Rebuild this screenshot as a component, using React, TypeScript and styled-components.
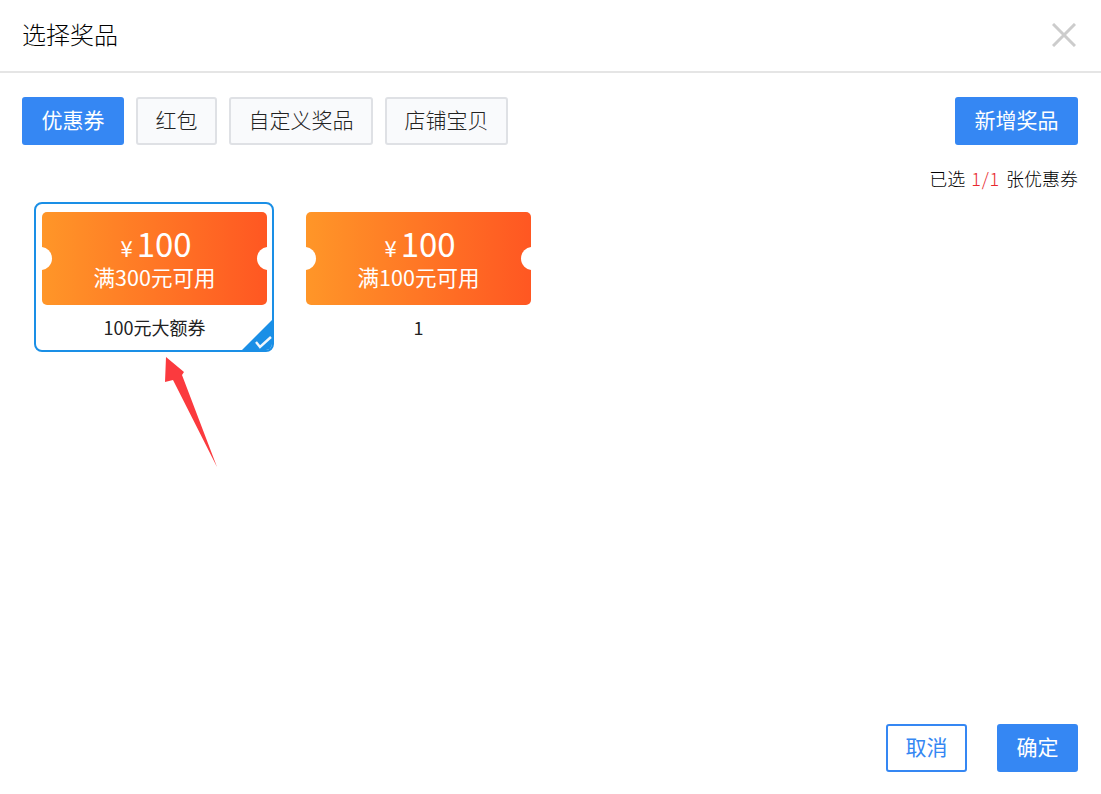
import { createGlobalStyle, styled } from 'styled-components';

const GlobalStyle = createGlobalStyle`
  html, body {
    margin: 0;
    padding: 0;
    background: #fff;
  }
  body {
    font-family: "Noto Sans CJK SC", "Liberation Sans", sans-serif;
    font-weight: 300;
    color: #000;
  }
`;

const Dialog = styled.div`
  position: relative;
  width: 1101px;
  height: 794px;
  display: flex;
  flex-direction: column;
  box-sizing: border-box;
  background: #fff;
`;

const Header = styled.header`
  height: 73px;
  box-sizing: border-box;
  padding: 0 25px 3px 22px;
  display: flex;
  align-items: center;
  justify-content: space-between;
  border-bottom: 2px solid #e5e5e5;
`;

const Title = styled.h2`
  margin: 0;
  font-size: 24px;
  font-weight: 300;
  line-height: 34px;
  color: #000;
`;

const CloseButton = styled.button`
  width: 24px;
  height: 24px;
  margin-top: 2px;
  padding: 0;
  border: none;
  background: none;
  display: flex;
  cursor: pointer;
`;

const Body = styled.main`
  flex: 1;
  padding: 24px 23px 0 22px;
`;

const Toolbar = styled.div`
  display: flex;
  align-items: center;
  gap: 12px;
`;

const Button = styled.button<{ $variant?: 'primary' | 'outline' | 'plain'; $width: number }>`
  width: ${({ $width }) => $width}px;
  height: 48px;
  padding: 0 0 4px;
  box-sizing: border-box;
  border-radius: 3px;
  font-family: inherit;
  font-size: 21px;
  font-weight: ${({ $variant }) => ($variant === 'plain' ? 300 : 400)};
  line-height: 1;
  cursor: pointer;
  border: 2px solid
    ${({ $variant }) => ($variant === 'plain' ? '#dfe1e5' : '#3587f3')};
  background: ${({ $variant }) =>
    $variant === 'plain' ? '#f9fafc' : $variant === 'outline' ? '#fff' : '#3587f3'};
  color: ${({ $variant }) =>
    $variant === 'plain' ? '#222' : $variant === 'outline' ? '#3587f3' : '#fff'};
`;

const AddButton = styled(Button)`
  margin-left: auto;
`;

const Counter = styled.div`
  margin-top: 21px;
  text-align: right;
  font-size: 18px;
  line-height: 24px;
  color: #000;
`;

const Count = styled.span`
  margin: 0 2px;
  letter-spacing: 0.8px;
  color: #e8282e;
`;

const CardList = styled.div`
  display: flex;
  gap: 24px;
  margin: 12px 0 0 12px;
`;

const Card = styled.div<{ $selected?: boolean }>`
  position: relative;
  width: 240px;
  height: 150px;
  box-sizing: border-box;
  padding: 8px 5px 0 6px;
  border: 2px solid ${({ $selected }) => ($selected ? '#1a8fe6' : 'transparent')};
  border-radius: 8px;
  overflow: hidden;
`;

const Ticket = styled.div`
  position: relative;
  height: 93px;
  border-radius: 5px;
  overflow: hidden;
  background: linear-gradient(90deg, #ff9628 0%, #ff5722 100%);
  color: #fff;
  font-weight: 400;
  display: flex;
  flex-direction: column;
  align-items: center;

  &::before,
  &::after {
    content: '';
    position: absolute;
    top: 35px;
    width: 23px;
    height: 23px;
    border-radius: 50%;
    background: #fff;
  }
  &::before {
    left: -13px;
  }
  &::after {
    right: -13px;
  }
`;

const Amount = styled.div`
  display: flex;
  align-items: baseline;
  margin: 13px 0 0 3px;
  height: 36px;
  line-height: 36px;
  font-size: 33px;
`;

const Currency = styled.span`
  font-size: 22px;
  margin-right: 4px;
`;

const Threshold = styled.div`
  margin-top: 2px;
  font-size: 21.5px;
  line-height: 28px;
`;

const CardName = styled.div`
  margin-top: 9px;
  text-align: center;
  font-size: 18px;
  font-weight: 400;
  line-height: 26px;
  color: #222;
`;

const Corner = styled.svg`
  position: absolute;
  right: 0;
  bottom: 0;
  display: block;
`;

const Arrow = styled.svg`
  position: absolute;
  left: 160px;
  top: 352px;
  display: block;
`;

const Footer = styled.footer`
  display: flex;
  justify-content: flex-end;
  gap: 30px;
  padding: 0 23px 22px 0;
`;

const coupons = [
  { id: 1, amount: 100, threshold: 300, name: '100元大额券', selected: true },
  { id: 2, amount: 100, threshold: 100, name: '1', selected: false },
];

export default function App() {
  return (
    <Dialog>
      <GlobalStyle />
      <Header>
        <Title>选择奖品</Title>
        <CloseButton aria-label="关闭">
          <svg width="24" height="24" viewBox="0 0 24 24">
            <path d="M1 1 L23 23 M23 1 L1 23" stroke="#cccccc" strokeWidth="3" fill="none" />
          </svg>
        </CloseButton>
      </Header>
      <Body>
        <Toolbar>
          <Button $width={102}>优惠券</Button>
          <Button $variant="plain" $width={81}>红包</Button>
          <Button $variant="plain" $width={144}>自定义奖品</Button>
          <Button $variant="plain" $width={123}>店铺宝贝</Button>
          <AddButton $width={123}>新增奖品</AddButton>
        </Toolbar>
        <Counter>
          已选 <Count>1/1</Count> 张优惠券
        </Counter>
        <CardList>
          {coupons.map((coupon) => (
            <Card key={coupon.id} $selected={coupon.selected}>
              <Ticket>
                <Amount>
                  <Currency>¥</Currency>
                  {coupon.amount}
                </Amount>
                <Threshold>满{coupon.threshold}元可用</Threshold>
              </Ticket>
              <CardName>{coupon.name}</CardName>
              {coupon.selected && (
                <Corner width="30" height="30" viewBox="0 0 30 30">
                  <path d="M30 0 L30 30 L0 30 Z" fill="#1a8fe6" />
                  <path d="M14 22 L18 27 L29 17" stroke="#f0f7fd" strokeWidth="2.4" fill="none" />
                </Corner>
              )}
            </Card>
          ))}
        </CardList>
      </Body>
      <Footer>
        <Button $variant="outline" $width={81}>取消</Button>
        <Button $width={81}>确定</Button>
      </Footer>
      <Arrow width="62" height="120" viewBox="0 0 62 120">
        <path d="M6 5 L24 20 L22 23 L57 115 L13 28 L5 30 Z" fill="#fb3a3e" />
      </Arrow>
    </Dialog>
  );
}
